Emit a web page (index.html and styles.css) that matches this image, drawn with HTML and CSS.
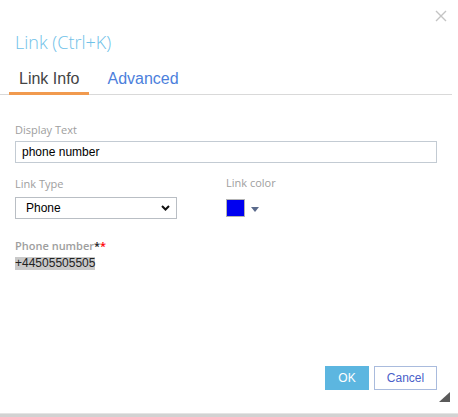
FILE: index.html
```html
<!DOCTYPE html>
<html lang="en">
  <head>
    <meta charset="UTF-8" />
    <title>Link</title>
    <link rel="stylesheet" href="styles.css">
  </head>
  <body>
    <div class="dialog">
      <div class="titlebar">
        <button class="close" type="button" aria-label="Close">
          <svg width="12" height="12" viewBox="0 0 12 12">
            <path d="M1 1 L11 11 M11 1 L1 11" stroke="#c4c4c4" stroke-width="1.4" fill="none" />
          </svg>
        </button>
      </div>

      <h1 class="title">Link (Ctrl+K)</h1>

      <div class="tabs">
        <span class="tab active">Link Info</span>
        <span class="tab">Advanced</span>
      </div>

      <div class="panel">
        <label class="field-label" for="displayText">Display Text</label>
        <input id="displayText" class="text-input" value="phone number" />

        <div class="row">
          <div class="col col-type">
            <label class="field-label" for="linkType">Link Type</label>
            <div class="select-wrap">
              <select id="linkType" class="select">
                <option>Phone</option>
                <option>URL</option>
                <option>E-mail</option>
              </select>
              <svg class="chevron" width="9" height="6" viewBox="0 0 9 6">
                <path d="M1 1 L4.5 4.5 L8 1" stroke="#111" stroke-width="2" fill="none" />
              </svg>
            </div>
          </div>
          <div class="col col-color">
            <span class="field-label">Link color</span>
            <div class="color-pick">
              <span class="swatch"></span>
              <span class="caret"></span>
            </div>
          </div>
        </div>

        <div class="phone">
          <span class="field-label strong">Phone number<span class="star">*</span><span class="star req">*</span></span>
          <span class="phone-value">+44505505505</span>
        </div>
      </div>

      <div class="footer">
        <button class="btn btn-ok" type="button">OK</button>
        <button class="btn btn-cancel" type="button">Cancel</button>
      </div>

      <span class="grip"></span>
    </div>
    <div class="bottom-bar"></div>
  </body>
</html>
```

FILE: styles.css
```css
body {
  margin: 0;
  font-family: "Liberation Sans", Arial, sans-serif;
  background: #fff;
  color: #222;
}

.dialog {
  position: relative;
  width: 452px;
  height: 413px;
  display: flex;
  flex-direction: column;
  box-sizing: border-box;
}

.titlebar {
  display: flex;
  justify-content: flex-end;
  height: 30px;
  padding: 10px 5px 0 0;
  box-sizing: border-box;
}

.close {
  width: 12px;
  height: 12px;
  padding: 0;
  border: none;
  background: none;
  display: block;
}

.close svg {
  display: block;
}

.title {
  margin: 0;
  padding-left: 15px;
  font-family: "Open Sans", sans-serif;
  font-weight: 300;
  font-size: 18px;
  line-height: 24px;
  color: #6fc1e8;
}

.tabs {
  display: flex;
  gap: 8px;
  margin-top: 16px;
  padding-left: 9px;
  border-bottom: 1px solid #d9d9d9;
}

.tab {
  padding: 0 10px 4px;
  font-size: 16px;
  line-height: 18px;
  color: #4c7fdc;
  border-bottom: 3px solid transparent;
  margin-bottom: -1px;
}

.tab.active {
  color: #444;
  border-bottom-color: #f19a4e;
}

.panel {
  padding: 27px 15px 0;
}

.field-label {
  display: block;
  font-family: "Open Sans", sans-serif;
  font-size: 11px;
  line-height: 15px;
  color: #9e9e9e;
}

.field-label.strong {
  font-weight: 600;
}

.star {
  color: #222;
}

.star.req {
  color: #f00;
}

.text-input {
  display: block;
  width: 422px;
  height: 22px;
  margin-top: 4px;
  padding: 0 6px;
  box-sizing: border-box;
  border: 1px solid #c3cbd3;
  border-radius: 0;
  font-family: "Liberation Sans", Arial, sans-serif;
  font-size: 12px;
  color: #000;
  outline: none;
}

.row {
  display: flex;
  margin-top: 12px;
}

.col-type {
  width: 211px;
  padding-top: 1px;
}

.select-wrap {
  position: relative;
  width: 162px;
  margin-top: 6px;
}

.select {
  display: block;
  width: 100%;
  height: 22px;
  padding: 0 10px;
  box-sizing: border-box;
  border: 1px solid #b9bec4;
  border-radius: 0;
  background: #fff;
  appearance: none;
  -webkit-appearance: none;
  font-family: "Liberation Sans", Arial, sans-serif;
  font-size: 12px;
  color: #000;
}

.chevron {
  position: absolute;
  right: 7px;
  top: 8px;
}

.color-pick {
  display: flex;
  align-items: center;
  gap: 6px;
  margin-top: 9px;
}

.swatch {
  width: 19px;
  height: 18px;
  box-sizing: border-box;
  border: 1px solid #b3b3b3;
  background: #0000f0;
}

.caret {
  width: 0;
  height: 0;
  border-left: 4.5px solid transparent;
  border-right: 4.5px solid transparent;
  border-top: 5px solid #5b6b8c;
  margin-top: 2px;
}

.phone {
  margin-top: 19px;
}

.phone-value {
  display: inline-block;
  margin-top: 4px;
  font-size: 12px;
  line-height: 13px;
  color: #222;
  background: #c9c9c9;
}

.footer {
  margin-top: auto;
  display: flex;
  justify-content: flex-end;
  gap: 5px;
  padding: 0 15px 23px;
}

.btn {
  height: 24px;
  padding: 0;
  font-family: "Liberation Sans", Arial, sans-serif;
  font-size: 12px;
  box-sizing: border-box;
  border-radius: 0;
  cursor: pointer;
}

.btn-ok {
  width: 44px;
  border: none;
  background: #5cb6e0;
  color: #fff;
}

.btn-cancel {
  width: 63px;
  border: 1px solid #a9bbdd;
  background: #fff;
  color: #4a5fc9;
}

/* corner resize handle */
.grip {
  position: absolute;
  right: 2px;
  bottom: 11px;
  width: 0;
  height: 0;
  border-left: 11px solid transparent;
  border-bottom: 10px solid #5a5a5a;
}

.bottom-bar {
  height: 4px;
  background: #d2d2d2;
  border-top: 1px solid #e4e4e4;
  box-sizing: border-box;
}
```
